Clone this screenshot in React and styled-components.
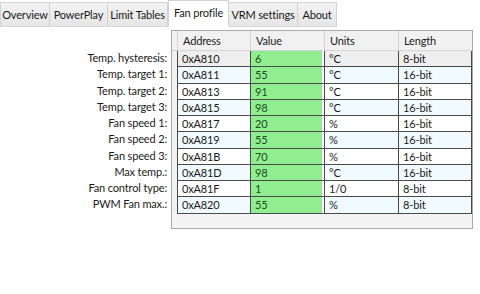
import React from "react";
import styled, { createGlobalStyle } from "styled-components";

const GlobalStyle = createGlobalStyle`
  html, body {
    margin: 0;
    padding: 0;
    background: #ffffff;
  }
  body {
    font-family: Lato, "Open Sans", sans-serif;
    font-size: 11px;
    letter-spacing: -0.15px;
    color: #1a1a1a;
  }
`;

const TABS = [
  { name: "Overview", width: 50 },
  { name: "PowerPlay", width: 58 },
  { name: "Limit Tables", width: 60 },
  { name: "Fan profile", width: 61, active: true },
  { name: "VRM settings", width: 69 },
  { name: "About", width: 39 },
];

const ROWS = [
  { label: "Temp. hysteresis:", address: "0xA810", value: "6", units: "°C", length: "8-bit" },
  { label: "Temp. target 1:", address: "0xA811", value: "55", units: "°C", length: "16-bit" },
  { label: "Temp. target 2:", address: "0xA813", value: "91", units: "°C", length: "16-bit" },
  { label: "Temp. target 3:", address: "0xA815", value: "98", units: "°C", length: "16-bit" },
  { label: "Fan speed 1:", address: "0xA817", value: "20", units: "%", length: "16-bit" },
  { label: "Fan speed 2:", address: "0xA819", value: "55", units: "%", length: "16-bit" },
  { label: "Fan speed 3:", address: "0xA81B", value: "70", units: "%", length: "16-bit" },
  { label: "Max temp.:", address: "0xA81D", value: "98", units: "°C", length: "16-bit" },
  { label: "Fan control type:", address: "0xA81F", value: "1", units: "1/0", length: "8-bit" },
  { label: "PWM Fan max.:", address: "0xA820", value: "55", units: "%", length: "8-bit" },
];

const COLS = "73px 74px 74px 74px";
const ROW_H = "16.25px";

const Page = styled.div`
  width: 480px;
  height: 294px;
  overflow: hidden;
`;

const TabStrip = styled.div`
  display: flex;
  align-items: flex-end;
  height: 27px;
  width: 337px;
  border-bottom: 1px solid #d6d6d6;
  box-sizing: border-box;
`;

const Tab = styled.div`
  box-sizing: border-box;
  width: ${(p) => p.$w}px;
  height: ${(p) => (p.$active ? 27 : 24)}px;
  margin-bottom: ${(p) => (p.$active ? -1 : 0)}px;
  display: flex;
  align-items: center;
  justify-content: center;
  padding-bottom: ${(p) => (p.$active ? 3 : 0)}px;
  border: 1px solid #d2d2d2;
  border-left: ${(p) => (p.$first || p.$active ? "1px solid #d2d2d2" : "none")};
  border-bottom: ${(p) => (p.$active ? "1px solid #ffffff" : "none")};
  background: ${(p) => (p.$active ? "#ffffff" : "linear-gradient(#f2f2f2, #e6e6e6)")};
  color: #1a1a1a;
  white-space: nowrap;
`;

const Body = styled.div`
  display: flex;
  margin-top: 3px;
`;

const Labels = styled.div`
  width: 167px;
  padding-top: 20px;
  padding-right: 4px;
  display: flex;
  flex-direction: column;
  align-items: flex-end;
`;

const Label = styled.div`
  height: ${ROW_H};
  line-height: ${ROW_H};
  white-space: nowrap;
`;

const Grid = styled.div`
  box-sizing: border-box;
  width: 302px;
  height: 199px;
  border: 1px solid #a9a9a9;
  background: #f4f4f4;
  display: flex;
  flex-direction: column;
`;

const HeaderRow = styled.div`
  display: grid;
  grid-template-columns: 5px ${COLS};
  height: 19px;
  background: #f1f1f1;
  border-bottom: 1px solid #d5d5d5;
`;

const HeaderCell = styled.div`
  display: flex;
  align-items: center;
  padding-left: 5px;
  border-left: 1px solid #d5d5d5;
  color: #1a1a1a;
`;

const Row = styled.div`
  display: grid;
  grid-template-columns: 5px ${COLS};
  height: ${ROW_H};
  box-sizing: border-box;
`;

const RowHeader = styled.div`
  background: #f1f1f1;
`;

const Cell = styled.div`
  box-sizing: border-box;
  display: flex;
  align-items: center;
  padding-left: 4px;
  border-left: 1px solid #4a4a4a;
  border-bottom: 1px solid #4a4a4a;
  background: ${(p) => (p.$green ? "#90ee90" : p.$bg)};
  box-shadow: ${(p) => (p.$green ? "inset -2px 0 0 #ffffff" : "none")};
  color: ${(p) => (p.$green ? "#1d4d1d" : "#1a1a1a")};
  white-space: nowrap;
  &:last-child {
    border-right: 1px solid #4a4a4a;
  }
`;

const rowBg = (i) => (i === 0 ? "#eeeeee" : i % 2 === 1 ? "#f0faff" : "#ffffff");

export default function App() {
  return (
    <Page>
      <GlobalStyle />
      <TabStrip>
        {TABS.map((t, i) => (
          <Tab key={t.name} $w={t.width} $active={t.active} $first={i === 0}>
            {t.name}
          </Tab>
        ))}
      </TabStrip>
      <Body>
        <Labels>
          {ROWS.map((r) => (
            <Label key={r.address}>{r.label}</Label>
          ))}
        </Labels>
        <Grid>
          <HeaderRow>
            <RowHeader />
            <HeaderCell>Address</HeaderCell>
            <HeaderCell>Value</HeaderCell>
            <HeaderCell>Units</HeaderCell>
            <HeaderCell>Length</HeaderCell>
          </HeaderRow>
          {ROWS.map((r, i) => (
            <Row key={r.address}>
              <RowHeader />
              <Cell $bg={rowBg(i)}>{r.address}</Cell>
              <Cell $green>{r.value}</Cell>
              <Cell $bg={rowBg(i)}>{r.units}</Cell>
              <Cell $bg={rowBg(i)}>{r.length}</Cell>
            </Row>
          ))}
        </Grid>
      </Body>
    </Page>
  );
}
